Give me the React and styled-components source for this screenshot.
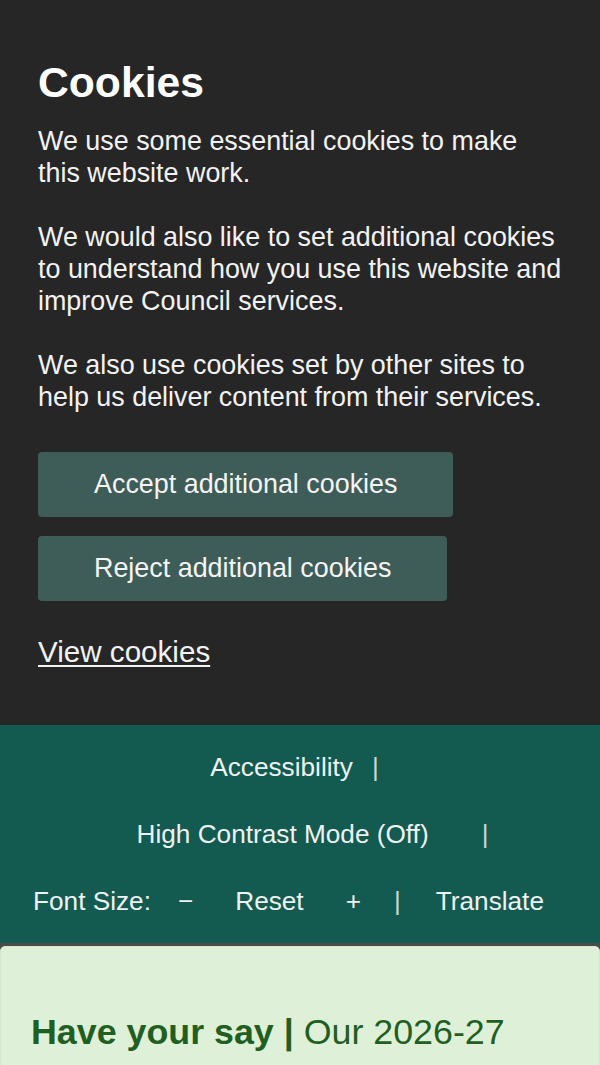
import styled, { createGlobalStyle } from "styled-components";

const GlobalStyle = createGlobalStyle`
    body {
        margin: 0;
        background: #4b4b4b;
        font-family: "Liberation Sans", Arial, sans-serif;
    }
`;

const App = () => (
    <>
        <GlobalStyle />
        <CookieBanner>
            <BannerTitle>Cookies</BannerTitle>
            <BannerText>
                We use some essential cookies to make this website work.
            </BannerText>
            <BannerText>
                We would also like to set additional cookies to understand how you use this
                website and improve Council services.
            </BannerText>
            <BannerText>
                We also use cookies set by other sites to help us deliver content from their
                services.
            </BannerText>
            <ButtonGroup>
                <BannerButton>Accept additional cookies</BannerButton>
                <BannerButton>Reject additional cookies</BannerButton>
            </ButtonGroup>
            <ViewLink href="#">View cookies</ViewLink>
        </CookieBanner>

        <AccessBar>
            <AccessRow shift={-11}>
                <AccessItem>Accessibility</AccessItem>
                <Divider space={19} />
            </AccessRow>
            <AccessRow shift={25}>
                <AccessItem>High Contrast Mode (Off)</AccessItem>
                <Divider space={53} />
            </AccessRow>
            <AccessRow shift={-23}>
                <AccessItem>Font Size:</AccessItem>
                <AccessItem space={27}>&minus;</AccessItem>
                <AccessItem space={42}>Reset</AccessItem>
                <AccessItem space={42}>+</AccessItem>
                <Divider space={33} />
                <AccessItem space={35}>Translate</AccessItem>
            </AccessRow>
        </AccessBar>

        <NoticeCard>
            <NoticeTitle>
                <strong>Have your say |</strong> Our 2026-27
            </NoticeTitle>
        </NoticeCard>
    </>
);

const CookieBanner = styled.section`
    background: #262626;
    color: #f2f2f2;
    padding: 57px 36px 57px 38px;
    display: flex;
    flex-direction: column;
    align-items: flex-start;
`;

const BannerTitle = styled.h2`
    margin: 0 0 17px;
    font-size: 42.67px;
    line-height: 1.2;
    font-weight: bold;
    color: #ffffff;
`;

const BannerText = styled.p`
    margin: 0 0 32px;
    font-size: 26.9px;
    line-height: 32px;

    &:nth-of-type(3) {
        margin-bottom: 39px;
    }
`;

const ButtonGroup = styled.div`
    display: flex;
    flex-direction: column;
    align-items: flex-start;
    gap: 19px;
    margin-bottom: 35px;
`;

const BannerButton = styled.button`
    background: #3e5c58;
    color: #f4f4f4;
    border: none;
    border-radius: 4px;
    padding: 16px 56px;
    font-family: "Liberation Sans", Arial, sans-serif;
    font-size: 26.9px;
    line-height: 33px;
    cursor: pointer;
`;

const ViewLink = styled.a`
    color: #f2f2f2;
    font-size: 29.6px;
    line-height: 32px;
    text-decoration: underline;
    text-underline-offset: 3px;
`;

const AccessBar = styled.nav`
    background: #135a50;
    color: #eef2f0;
    padding: 9px 0 8px;
    display: flex;
    flex-direction: column;
`;

const AccessRow = styled.div`
    display: flex;
    justify-content: center;
    align-items: baseline;
    height: 67px;
    line-height: 67px;
    font-size: 26.2px;
    padding-left: ${props => (props.shift > 0 ? props.shift : 0)}px;
    padding-right: ${props => (props.shift < 0 ? -props.shift : 0)}px;
`;

const AccessItem = styled.span`
    margin-left: ${props => props.space || 0}px;
    white-space: nowrap;
`;

const Divider = styled.span`
    margin-left: ${props => props.space || 0}px;
    color: #c9d6d3;

    &::before {
        content: "|";
    }
`;

const NoticeCard = styled.div`
    margin-top: 3px;
    background: #dff0d8;
    border: 1px solid #d3e8c9;
    border-radius: 5px 5px 0 0;
    padding: 64px 30px 20px;
`;

const NoticeTitle = styled.h3`
    margin: 0;
    font-size: 35.8px;
    line-height: 1.2;
    font-weight: normal;
    color: #1f5f22;

    strong {
        font-weight: bold;
    }
`;

export default App;
